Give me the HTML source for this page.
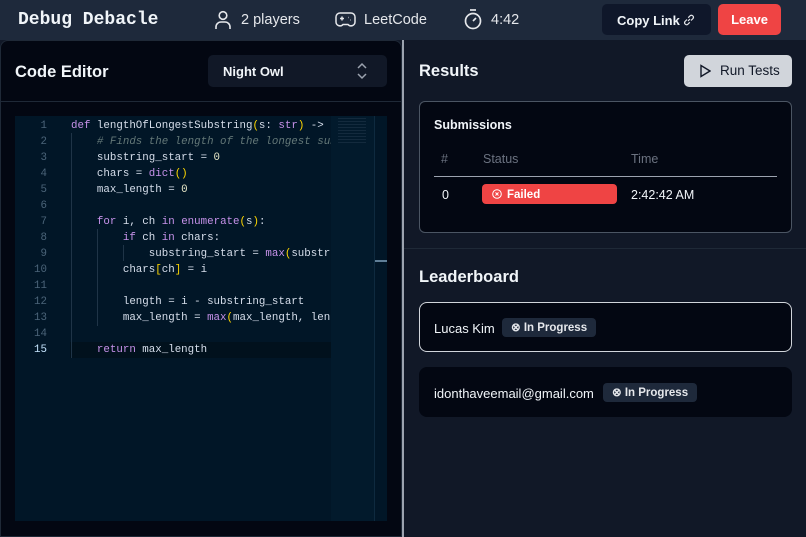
<!DOCTYPE html>
<html><head><style>
*{margin:0;padding:0;box-sizing:border-box}
body{width:806px;height:537px;overflow:hidden;background:#111827;font-family:"Liberation Sans",sans-serif;color:#e5e7eb;position:relative}
.abs{position:absolute}
.hdr{left:0;top:0;width:806px;height:40px;background:#1e293b}
.mono{font-family:"Liberation Mono",monospace}
.code{font-family:"Liberation Mono",monospace;font-size:10.8px;line-height:16px;white-space:pre;color:#d6deeb}
.ln{color:#4b6479;text-align:right;width:32px}
.k{color:#c792ea}.y{color:#ffd700}.c{color:#637777;font-style:italic}.n{color:#e8e8c8}
.badge{background:#1e293b;border-radius:4px;font-size:11.5px;font-weight:bold;color:#e5e7eb;height:19px;line-height:19px;padding:0 9px}
</style></head><body>
<div class="abs hdr"></div>
<div class="abs mono" style="left:18px;top:10px;font-size:18px;font-weight:bold;color:#f1f5f9">Debug Debacle</div>
<svg class="abs" style="left:214px;top:10px" width="18" height="20" viewBox="0 0 18 20" fill="none" stroke="#e5e7eb" stroke-width="1.6"><circle cx="9" cy="5.5" r="3.8"/><path d="M2 19v-2a5 5 0 0 1 5-5h4a5 5 0 0 1 5 5v2"/></svg>
<div class="abs" style="left:241px;top:12px;font-size:14.5px">2 players</div>
<svg class="abs" style="left:335px;top:11px" width="21" height="17" viewBox="0 0 21 17" fill="none" stroke="#e5e7eb" stroke-width="1.5"><path d="M5 2h11a4 4 0 0 1 4 4v5a4 4 0 0 1-7 2.5h-5A4 4 0 0 1 1 11V6a4 4 0 0 1 4-4z"/><path d="M5 7.5h4M7 5.5v4M13 6.5h.5M15 9h.5"/></svg>
<div class="abs" style="left:364px;top:12px;font-size:14.5px">LeetCode</div>
<svg class="abs" style="left:463px;top:8px" width="20" height="22" viewBox="0 0 20 22" fill="none" stroke="#e5e7eb" stroke-width="1.7"><path d="M7 2h6"/><circle cx="10" cy="13" r="7.5"/><path d="M10 13l3-3"/></svg>
<div class="abs" style="left:491px;top:12px;font-size:14.5px">4:42</div>
<div class="abs" style="left:602px;top:4px;width:109px;height:31px;background:#0f172a;border-radius:5px"></div>
<div class="abs" style="left:617px;top:13px;font-size:13px;font-weight:bold;color:#f1f5f9">Copy Link</div>
<svg class="abs" style="left:682px;top:13px" width="14" height="14" viewBox="0 0 14 14" fill="none" stroke="#e5e7eb" stroke-width="1.2"><path d="M6 8l2-2M5 6.5L3 8.5a2 2 0 0 0 2.8 2.8L7.8 9.3M9 7.5l2-2A2 2 0 0 0 8.2 2.7L6.2 4.7"/></svg>
<div class="abs" style="left:718px;top:4px;width:63px;height:31px;background:#ef4444;border-radius:5px;font-size:13px;font-weight:bold;color:#fff;text-align:center;line-height:31px">Leave</div>

<div class="abs" style="left:0;top:40px;width:402px;height:497px;background:#030712;border:1px solid #1f2937;border-radius:8px 8px 0 0"></div>
<div class="abs" style="left:15px;top:63px;font-size:16.5px;font-weight:bold;color:#f1f5f9">Code Editor</div>
<div class="abs" style="left:208px;top:55px;width:179px;height:32px;background:#111827;border-radius:5px"></div>
<div class="abs" style="left:223px;top:64px;font-size:13px;font-weight:bold;color:#f1f5f9">Night Owl</div>
<svg class="abs" style="left:355px;top:62px" width="14" height="18" viewBox="0 0 14 18" fill="none" stroke="#9ca3af" stroke-width="1.5"><path d="M3 6l4-4 4 4M3 12l4 4 4-4"/></svg>
<div class="abs" style="left:0;top:101px;width:402px;height:1px;background:#1f2937"></div>
<div class="abs" style="left:15px;top:116px;width:372px;height:405px;background:#011627"></div>
<div class="abs" style="left:331px;top:116px;width:43px;height:405px;background:#021a2c"></div>
<div class="abs" style="left:374px;top:116px;width:1px;height:405px;background:#0e2a3f"></div>
<div class="abs" style="left:375px;top:260px;width:12px;height:2px;background:#5f7e97"></div>
<div class="abs" style="left:70px;top:342px;width:261px;height:16px;background:#01111d"></div>
<div class="abs" style="left:71px;top:133px;width:1px;height:225px;background:#1f3447"></div>
<div class="abs" style="left:97px;top:229px;width:1px;height:97px;background:#1f3447"></div>
<div class="abs" style="left:123px;top:245px;width:1px;height:16px;background:#1f3447"></div>
<div class="abs code ln" style="left:15px;top:118px">1
2
3
4
5
6
7
8
9
10
11
12
13
14
<span style="color:#c5e4fd">15</span></div>
<div class="abs" style="left:71px;top:118px;width:260px;height:242px;overflow:hidden"><div class="code"><span class="k">def</span> lengthOfLongestSubstring<span class="y">(</span>s: <span class="k">str</span><span class="y">)</span> -&gt; 
    <span class="c"># Finds the length of the longest substring</span>
    substring_start = <span class="n">0</span>
    chars = <span class="k">dict</span><span class="y">()</span>
    max_length = <span class="n">0</span>

    <span class="k">for</span> i, ch <span class="k">in</span> <span class="k">enumerate</span><span class="y">(</span>s<span class="y">)</span>:
        <span class="k">if</span> ch <span class="k">in</span> chars:
            substring_start = <span class="k">max</span><span class="y">(</span>substring_start
        chars<span class="y">[</span>ch<span class="y">]</span> = i

        length = i - substring_start
        max_length = <span class="k">max</span><span class="y">(</span>max_length, length<span class="y">)</span>

    <span class="k">return</span> max_length</div></div>
<div class="abs" style="left:338px;top:118px;width:28px;height:26px;background:repeating-linear-gradient(#3b5064 0 1px,transparent 1px 3px);opacity:.3"></div>
<div class="abs" style="left:402px;top:40px;width:2px;height:497px;background:#9ca3af"></div>

<div class="abs" style="left:419px;top:62px;font-size:16.5px;font-weight:bold;color:#f1f5f9">Results</div>
<div class="abs" style="left:684px;top:55px;width:108px;height:32px;background:#d1d5db;border-radius:5px"></div>
<svg class="abs" style="left:699px;top:64px" width="12" height="14" viewBox="0 0 12 14" fill="none" stroke="#111827" stroke-width="1.4"><path d="M2 1.5v11l9-5.5z"/></svg>
<div class="abs" style="left:720px;top:63px;font-size:13.5px;color:#111827">Run Tests</div>
<div class="abs" style="left:419px;top:101px;width:373px;height:132px;background:#030712;border:1px solid #4b5563;border-radius:6px"></div>
<div class="abs" style="left:434px;top:118px;font-size:12.5px;font-weight:bold;color:#f1f5f9">Submissions</div>
<div class="abs" style="left:441px;top:152px;font-size:12.5px;color:#6b7280">#</div>
<div class="abs" style="left:483px;top:152px;font-size:12.5px;color:#6b7280">Status</div>
<div class="abs" style="left:631px;top:152px;font-size:12.5px;color:#6b7280">Time</div>
<div class="abs" style="left:434px;top:176px;width:343px;height:1px;background:#9ca3af"></div>
<div class="abs" style="left:442px;top:188px;font-size:12.5px;color:#f1f5f9">0</div>
<div class="abs" style="left:482px;top:184px;width:135px;height:20px;background:#ef4444;border-radius:4px"></div>
<svg class="abs" style="left:492px;top:189px" width="10" height="10" viewBox="0 0 10 10" fill="none" stroke="#fff" stroke-width="1"><circle cx="5" cy="5" r="4.3"/><path d="M3.5 3.5l3 3M6.5 3.5l-3 3"/></svg>
<div class="abs" style="left:507px;top:189px;font-size:11.5px;font-weight:bold;color:#fff">Failed</div>
<div class="abs" style="left:631px;top:188px;font-size:12.5px;color:#f1f5f9">2:42:42 AM</div>
<div class="abs" style="left:404px;top:248px;width:402px;height:1px;background:#1f2937"></div>
<div class="abs" style="left:419px;top:268px;font-size:16.5px;font-weight:bold;color:#f1f5f9">Leaderboard</div>
<div class="abs" style="left:419px;top:302px;width:373px;height:50px;background:#030712;border:1px solid #d1d5db;border-radius:8px"></div>
<div class="abs" style="left:434px;top:321px;font-size:13px;color:#f1f5f9">Lucas Kim</div>
<div class="abs badge" style="left:502px;top:318px;line-height:20px">⊗ In Progress</div>
<div class="abs" style="left:419px;top:367px;width:373px;height:50px;background:#030712;border-radius:8px"></div>
<div class="abs" style="left:434px;top:386px;font-size:13px;color:#f1f5f9">idonthaveemail@gmail.com</div>
<div class="abs badge" style="left:603px;top:383px;line-height:20px">⊗ In Progress</div>
</body></html>
